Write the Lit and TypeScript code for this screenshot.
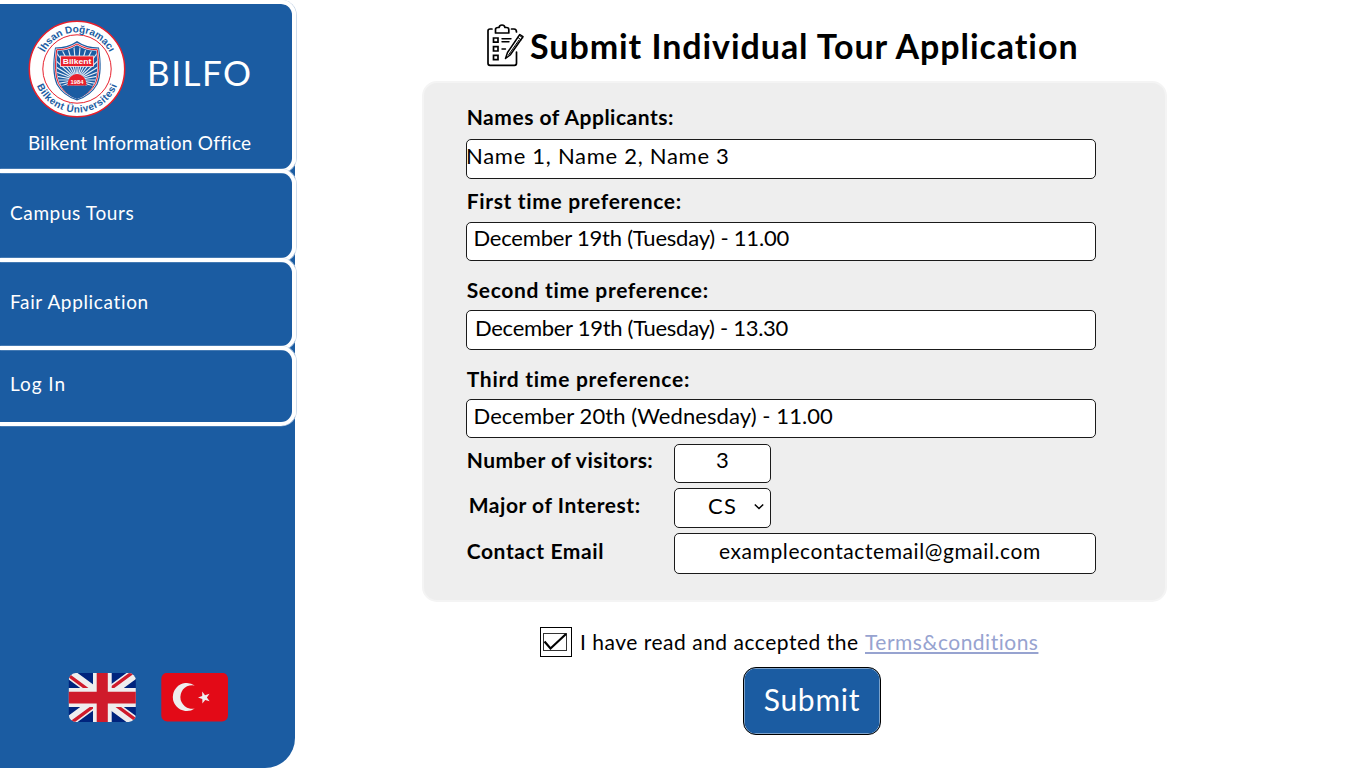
import { LitElement, html, css, svg } from "lit";
import { customElement } from "lit/decorators.js";

const FONT = css`Lato, "Open Sans", sans-serif`;

/** Round university crest with lettering set on two arcs. */
@customElement("bilkent-crest")
export class BilkentCrest extends LitElement {
  static styles = css`
    :host { display: block; width: 98px; height: 98px; }
    svg { display: block; }
    .ring { font: 700 10px "Liberation Sans", Arial, sans-serif; fill: #1b5ca2; }
    .plate { font: 700 7.8px "Liberation Sans", Arial, sans-serif; fill: #fff; }
    .year { font: 700 5.8px "Liberation Sans", Arial, sans-serif; fill: #fff; }
  `;
  render() {
    const rays = Array.from({ length: 34 }, (_, i) => {
      const a = (Math.PI * 2 * i) / 34;
      return svg`<line x1="49" y1="60" x2=${49 + 60 * Math.cos(a)} y2=${60 + 60 * Math.sin(a)} stroke="#e8eef6" stroke-width="1.1"></line>`;
    });
    return html`<svg width="98" height="98" viewBox="0 0 98 98">
      <defs>
        <path id="top" d="M12.500 49a36.500 36.500 0 0 1 73 0"></path>
        <path id="bottom" d="M5.500 49a43.500 43.500 0 0 0 87 0"></path>
        <clipPath id="shield"><path d="M49 26Q58 32 68.500 31.500Q71 52 66 64Q61 75 49 79Q37 75 32 64Q27 52 29.500 31.500Q40 32 49 26Z"></path></clipPath>
      </defs>
      <circle cx="49" cy="49" r="47.700" fill="#fff" stroke="#e8202c" stroke-width="1.500"></circle>
      <circle cx="49" cy="49" r="34.200" fill="#fff" stroke="#e8202c" stroke-width="1"></circle>
      <text class="ring" text-anchor="middle" textLength="80"><textPath href="#top" startOffset="50%">İhsan Doğramacı</textPath></text>
      <text class="ring" text-anchor="middle" textLength="102"><textPath href="#bottom" startOffset="50%">Bilkent Üniversitesi</textPath></text>
      <path d="M49 21Q58 27.500 71 27.500Q75 52 69.500 64.500Q63 76 49 80.500Q35 76 28.500 64.500Q23 52 27 27.500Q40 27.500 49 21Z" fill="#1b5ca2"></path>
      <path d="M49 24Q59 30 69.300 29.700Q72.500 52 67.500 63.500Q62 74 49 78Q36 74 30.500 63.500Q25.500 52 28.700 29.700Q39 30 49 24Z" fill="none" stroke="#f3e9f0" stroke-width="2.200"></path>
      <path d="M49 24Q59 30 69.300 29.700Q72.500 52 67.500 63.500Q62 74 49 78Q36 74 30.500 63.500Q25.500 52 28.700 29.700Q39 30 49 24Z" fill="none" stroke="#e8202c" stroke-width="1"></path>
      <g clip-path="url(#shield)">
        <g>${rays}</g>
        <path d="M28 65.500H70V80H28Z" fill="#1b5ca2"></path>
      </g>
      <rect x="32.500" y="36" width="33" height="10.500" fill="#e8202c" stroke="#fff" stroke-width=".7"></rect>
      <text class="plate" x="49" y="44" text-anchor="middle" textLength="28.500" lengthAdjust="spacingAndGlyphs">Bilkent</text>
      <path d="M39.500 65.500C39.500 59 43.500 54 49 54S58.500 59 58.500 65.500Z" fill="#e8202c"></path>
      <text class="year" x="49" y="63.700" text-anchor="middle">1984</text>
    </svg>`;
  }
}

@customElement("side-bar")
export class SideBar extends LitElement {
  static styles = css`
    :host { display: block; width: 296px; height: 768px; flex: none; font-family: ${FONT}; color: #fff; }
    .panel { width: 295px; height: 763.500px; margin-top: 4px; background: #1b5ca2; border-radius: 0 14px 30px 0; display: flex; flex-direction: column; }
    .cell { box-sizing: border-box; width: 296px; border: 4px solid #fff; border-left: 0; border-radius: 0 15px 15px 0; flex: none; box-shadow: .5px 0 0 .3px #c3d3e6; }
    .head { width: 295.500px; height: 173px; margin-top: -4px; padding: 16px 0 0 28px; border-bottom-width: 4.500px; }
    .brand { display: flex; }
    .name { font-size: 35px; letter-spacing: 1.5px; line-height: 42px; padding: 31px 0 0 21px; }
    .office { font-size: 19px; letter-spacing: .26px; line-height: 24px; margin-top: 13px; white-space: nowrap; }
    .nav { display: flex; align-items: center; padding-left: 10px; font-size: 19px; text-decoration: none; color: #fff; }
    .tours { height: 93px; margin-top: -4px; letter-spacing: .62px; padding-bottom: 6px; }
    .fair { height: 92px; margin-top: -4px; letter-spacing: .65px; padding-bottom: 5px; }
    .login { height: 79.500px; margin-top: -4px; letter-spacing: .96px; padding-bottom: 4px; }
    .flags { display: flex; gap: 25px; padding: 247px 0 0 68px; }
    svg { display: block; }
  `;
  render() {
    return html`<nav class="panel">
      <header class="cell head">
        <div class="brand"><bilkent-crest></bilkent-crest><div class="name">BILFO</div></div>
        <div class="office">Bilkent Information Office</div>
      </header>
      <a class="cell nav tours">Campus Tours</a>
      <a class="cell nav fair">Fair Application</a>
      <a class="cell nav login">Log In</a>
      <div class="flags">
        <svg width="68" height="50" viewBox="0 .500 68 50">
          <defs><clipPath id="uk"><rect x=".8" y=".6" width="67" height="48.800" rx="7"></rect></clipPath></defs>
          <g clip-path="url(#uk)">
            <rect width="68" height="50" fill="#00247d"></rect>
            <path d="M-2 -1.500L70 51.500M70 -1.500L-2 51.500" stroke="#eee" stroke-width="10.500"></path>
            <path d="M34 27.500L-2 1M34 22.500L70 49M34 27.500L-2 54M34 22.500L70 -4" stroke="#cf1b2b" stroke-width="3.400"></path>
            <path d="M25 0H43.700V15.500H68V34.500H43.700V50H25V34.500H0V15.500H25Z" fill="#eee"></path>
            <path d="M28.700 0H39.800V19.200H68V31H39.800V50H28.700V31H0V19.200H28.700Z" fill="#cf1b2b"></path>
          </g>
        </svg>
        <svg width="68" height="50" viewBox="0 .500 68 50">
          <rect x=".3" y=".3" width="66.700" height="48.700" rx="6" fill="#e30a17"></rect>
          <path d="M35.300 13A14 14 0 1 0 35.300 36A11.800 11.800 0 1 1 35.300 13Z" fill="#eee" transform="translate(-1.500 0)"></path>
          <path d="M37 25L41.200 23.600L41.200 19L44 22.700L48.500 21.200L45.900 25L48.600 28.700L44.200 27.400L41.400 31L41.300 26.500Z" fill="#eee"></path>
        </svg>
      </div>
    </nav>`;
  }
}

@customElement("app-root")
export class AppRoot extends LitElement {
  static styles = css`
    :host { display: block; width: 1366px; height: 768px; overflow: hidden; background: #fff; font-family: ${FONT}; color: #000; }
    .page { display: flex; height: 768px; }
    main { flex: 1; display: flex; flex-direction: column; padding-left: 126px; }
    h1 { margin: 0; height: 81px; display: flex; box-sizing: border-box; padding: 22px 0 0 63px; font-size: 34px; line-height: 45px; letter-spacing: .94px; font-weight: 700; white-space: nowrap; }
    .title { padding-top: 1px; }
    .clip { width: 45px; height: 46px; flex: none; }
    .card { box-sizing: border-box; width: 745px; height: 521px; background: #eee; border: 2px solid #f4f4f4; border-radius: 15px; padding: 21px 0 0 42px; }
    .label { font-weight: 700; font-size: 21px; line-height: 26px; height: 26px; white-space: nowrap; text-indent: .7px; }
    .box { box-sizing: border-box; border: 1px solid #1a1a1a; border-radius: 5px; background: #fff; width: 630px; font-size: 22px; white-space: nowrap; }
    .b1 { height: 40px; margin-top: 9px; line-height: 31px; letter-spacing: .72px; text-indent: -1px; }
    .b2 { height: 39px; margin-top: 8px; line-height: 30px; letter-spacing: -.21px; padding-left: 6.5px; }
    .b3 { height: 40px; margin-top: 7px; line-height: 33px; letter-spacing: -.29px; padding-left: 8px; }
    .b4 { height: 39px; margin-top: 7px; line-height: 32px; letter-spacing: .08px; padding-left: 6.5px; }
    .l1 { letter-spacing: .52px; }
    .l2 { letter-spacing: .67px; margin-top: 9px; }
    .l3 { letter-spacing: .67px; margin-top: 16px; }
    .l4 { letter-spacing: .73px; margin-top: 16px; }
    .row { display: grid; grid-template-columns: 208px auto; justify-content: start; }
    .r1 { margin-top: 6px; }
    .r2 { margin-top: 5px; }
    .r3 { margin-top: 5px; }
    .r1 .label { padding-top: 3px; letter-spacing: .46px; }
    .r2 .label { padding: 4px 0 0 2px; letter-spacing: .55px; }
    .r3 .label { padding-top: 5px; letter-spacing: .6px; }
    .count { width: 97px; height: 39px; line-height: 30px; text-align: center; }
    .major { width: 97px; height: 40px; line-height: 33px; display: flex; padding-left: 33px; letter-spacing: 1.2px; gap: 16px; }
    .chev { margin-top: 13px; width: 12px; height: 10px; }
    .mail { width: 422px; height: 41px; line-height: 33px; font-size: 21px; letter-spacing: .59px; padding-left: 44px; }
    .terms { display: flex; margin: 25px 0 0 118px; font-size: 21px; line-height: 29px; white-space: nowrap; }
    .check { width: 32px; height: 30px; margin-right: 8px; }
    .agree { letter-spacing: .51px; width: 285px; }
    .link { letter-spacing: .5px; color: #97a3d0; text-decoration: underline; text-decoration-thickness: 2px; text-underline-offset: 2px; text-decoration-skip-ink: none; }
    .submit { box-sizing: border-box; width: 138px; height: 68px; margin: 10px 0 0 321px; padding: 0 0 5px 0; border: 1px solid #000; border-radius: 13px; background: #1b5ca2; box-shadow: inset 0 0 0 .5px #dfe8f2; color: #fff; font: 400 30px ${FONT}; letter-spacing: .75px; }
    svg { display: block; }
  `;
  render() {
    return html`<div class="page">
      <side-bar></side-bar>
      <main>
        <h1>
          <svg class="clip" viewBox="485 22 45 46" fill="none" stroke="#000" stroke-width="1.700" stroke-linecap="round" stroke-linejoin="round">
            <path d="M492 29H490Q488 29 488 31V63.300Q488 65.300 490 65.300H514.500Q516.500 65.300 516.500 63.300V52M511.500 29H514Q516.500 29 516.500 32"></path>
            <path d="M495.500 33V29.500Q495.500 27.500 498 27.500H499Q499.500 25 502 25T505 27.500H506.500Q508.800 27.500 508.800 29.500V33Z"></path>
            <path d="M493.500 38H498V42.200H493.500ZM493.500 46.700H498V51H493.500ZM493.500 55.400H498V59.700H493.500Z" stroke-linejoin="miter"></path>
            <path d="M502 38.800H511M502 41.800H509M502 49H505.500" stroke-width="1.400"></path>
            <path d="M505.500 58.500L507.500 52.500L519.800 34.500L523 36.700L510.200 55Z" stroke-width="1.500"></path>
            <path d="M519.500 35.500L522.800 37.800M518 37.500L521 39.800M508.500 55L519 40" stroke-width="1"></path>
          </svg>
          <span class="title">Submit Individual Tour Application</span>
        </h1>
        <section class="card">
          <div class="label l1">Names of Applicants:</div>
          <div class="box b1">Name 1, Name 2, Name 3</div>
          <div class="label l2">First time preference:</div>
          <div class="box b2">December 19th (Tuesday) - 11.00</div>
          <div class="label l3">Second time preference:</div>
          <div class="box b3">December 19th (Tuesday) - 13.30</div>
          <div class="label l4">Third time preference:</div>
          <div class="box b4">December 20th (Wednesday) - 11.00</div>
          <div class="row r1"><div class="label">Number of visitors:</div><div class="box count">3</div></div>
          <div class="row r2"><div class="label">Major of Interest:</div>
            <div class="box major"><span>CS</span><svg class="chev" viewBox="0 0 12 10" fill="none" stroke="#000" stroke-width="1.500"><path d="M1.800 2.500L6 6.500L10.200 2.500"></path></svg></div>
          </div>
          <div class="row r3"><div class="label">Contact Email</div><div class="box mail">examplecontactemail@gmail.com</div></div>
        </section>
        <div class="terms">
          <svg class="check" viewBox="0 0 32 30" fill="none" stroke="#000">
            <rect x=".5" y=".5" width="31" height="29"></rect>
            <rect x="3.500" y="6.500" width="23" height="17" stroke="#333"></rect>
            <path d="M4.500 14.500L10.500 21.500L26 7" stroke-width="2.200"></path>
          </svg>
          <span class="agree">I have read and accepted the</span>
          <a class="link">Terms&amp;conditions</a>
        </div>
        <button class="submit">Submit</button>
      </main>
    </div>`;
  }
}
